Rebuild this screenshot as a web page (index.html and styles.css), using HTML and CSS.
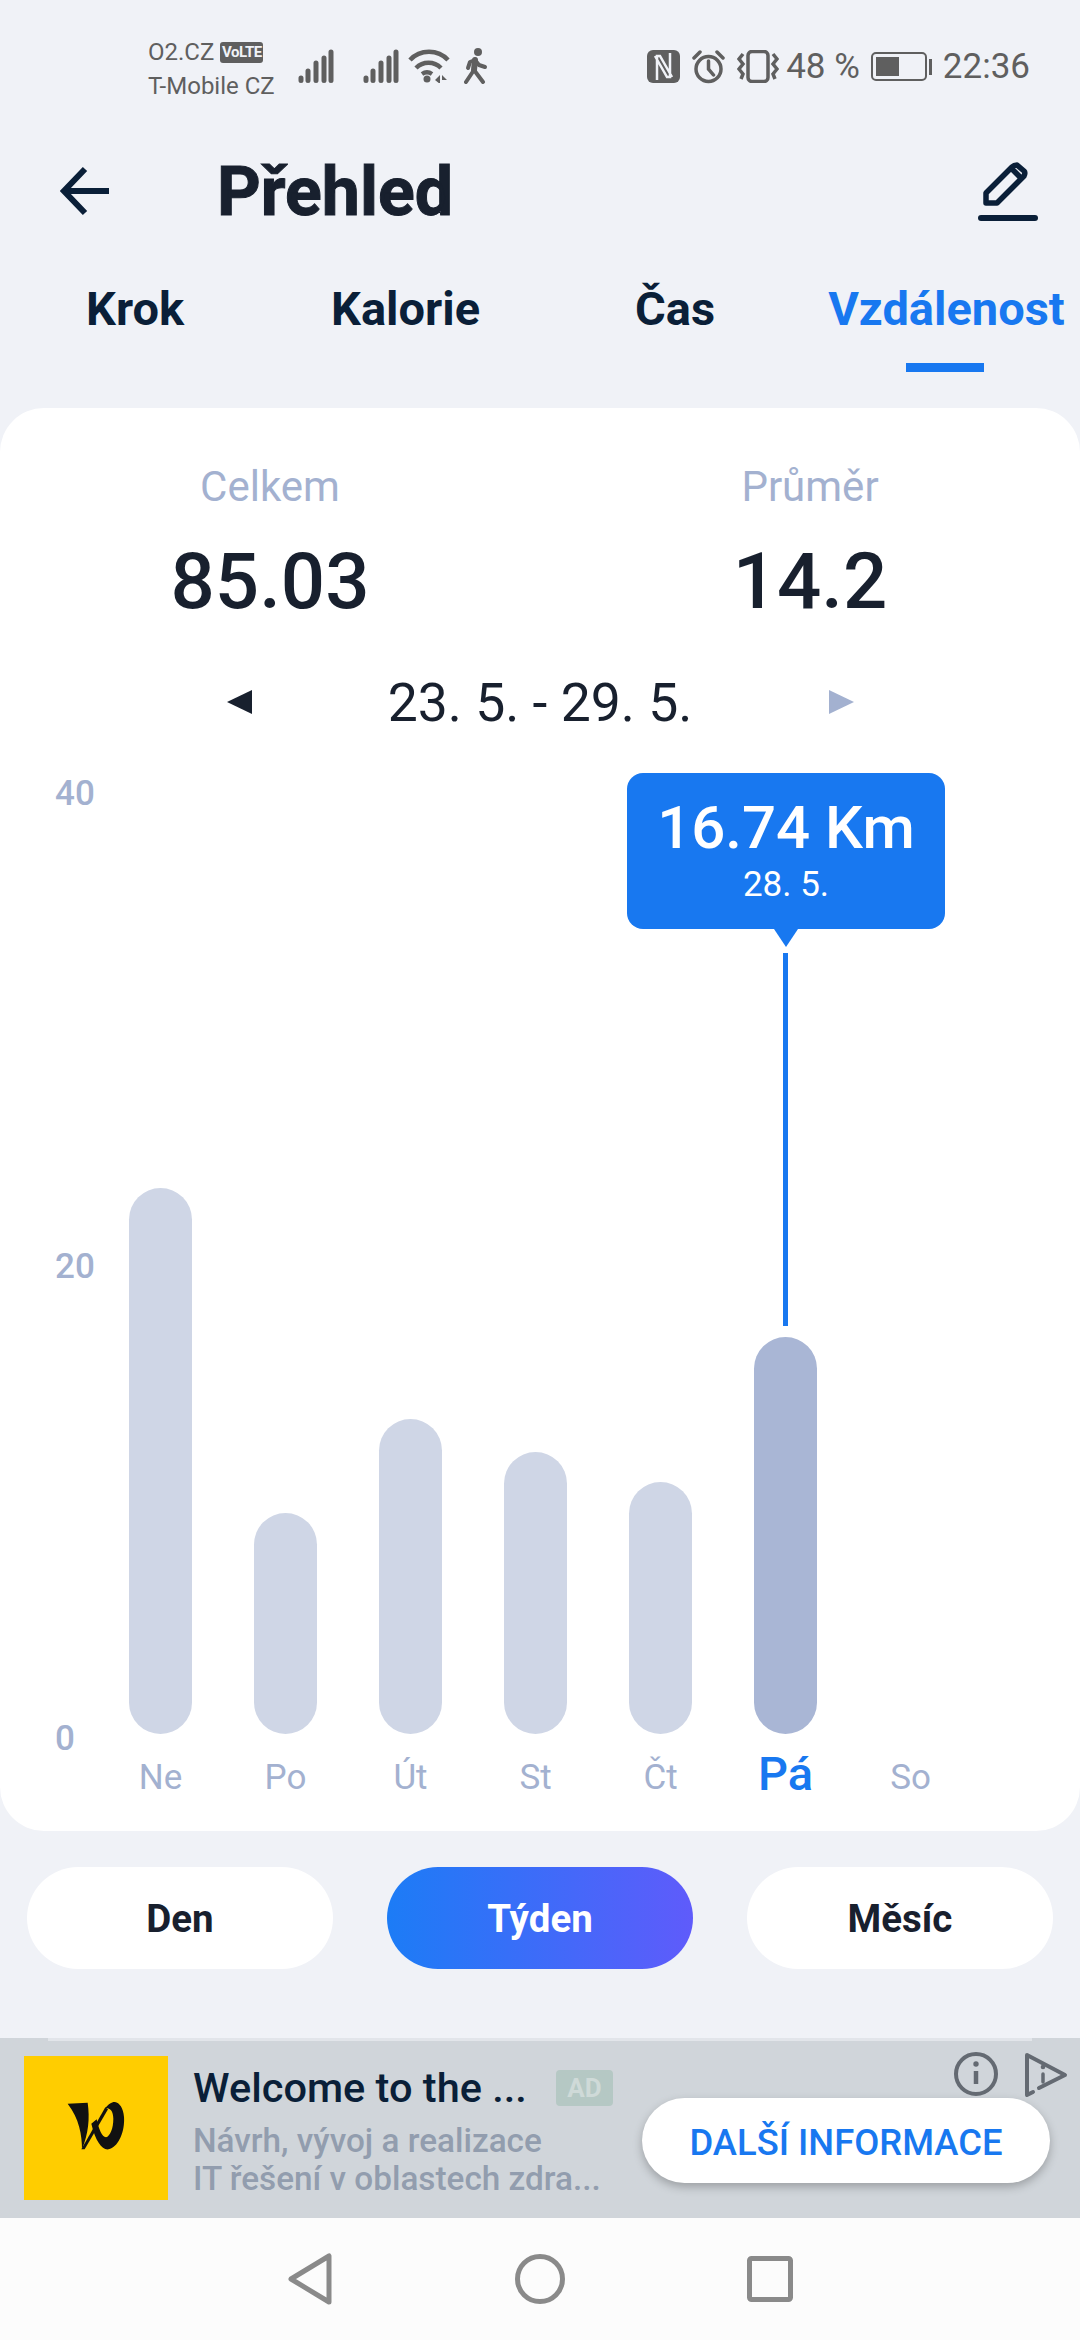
FILE: index.html
```html
<!DOCTYPE html>
<html lang="cs">
<head>
    <meta charset="UTF-8">
    <meta name="viewport" content="width=device-width, initial-scale=1.0">
    <title>Přehled</title>
    <link rel="stylesheet" href="styles.css">
</head>
<body>
    <!-- Status bar -->
    <div class="status-bar">
        <div class="carriers">
            <div class="carrier-top"><span>O2.CZ</span><span class="volte">VoLTE</span></div>
            <div>T-Mobile CZ</div>
        </div>
        <svg class="status-icon signal-one" width="36" height="34" viewBox="0 0 36 34" fill="none" stroke="#5f5f5f" stroke-width="5" stroke-linecap="round"><path d="M3 29v2.500M10 22v9.500M18 14v17.500M26 9v22.500M33 3v28.500"/></svg>
        <svg class="status-icon signal-two" width="36" height="34" viewBox="0 0 36 34" fill="none" stroke="#5f5f5f" stroke-width="5" stroke-linecap="round"><path d="M3 29v2.500M10 22v9.500M18 14v17.500M26 9v22.500M33 3v28.500"/></svg>
        <svg class="status-icon wifi" width="42" height="34" viewBox="0 0 42 34" fill="none" stroke="#5f5f5f" stroke-width="4.500"><path d="M2 11C12 0 30 0 40 11"/><path d="M8 19c7-7 18-7 25 0"/><path d="M14 25c3-2 7-2 10 0"/><circle cx="19" cy="30" r="3.500" fill="#5f5f5f" stroke="none"/><path d="M27 31l5-5v9zM34 26l5 5h-5zM34 29v6" fill="#5f5f5f" stroke="none"/></svg>
        <svg class="status-icon walk" width="24" height="36" viewBox="0 0 24 36" fill="none" stroke="#5f5f5f" stroke-width="4" stroke-linecap="round" stroke-linejoin="round"><circle cx="14" cy="4" r="4" fill="#5f5f5f" stroke="none"/><path d="M11 12 10 22M2 34l8-12 9 12" /><path d="M4 20l2-6 5-2 4 5 6 2"/><path d="M11 12 10 22" stroke-width="6"/></svg>
        <div class="status-right">
            <svg width="33" height="33" viewBox="0 0 33 33"><rect width="33" height="33" rx="6" fill="#5f5f5f"/><path d="M10 30V6h3l12 21M23 3v24h-3L8 6" fill="none" stroke="#f0f2f7" stroke-width="2.500"/></svg>
            <svg width="33" height="34" viewBox="0 0 33 34" fill="none" stroke="#5f5f5f" stroke-width="3.500"><circle cx="16.500" cy="19" r="12.500"/><path d="M16.500 11v8l5 6M2 8l6-6M31 8l-6-6" stroke-linecap="round"/></svg>
            <svg width="42" height="33" viewBox="0 0 42 33" fill="none" stroke="#5f5f5f" stroke-width="3.500"><rect x="11" y="1.500" width="20" height="30" rx="4"/><path d="M6 4 2 9l4 5-4 5 4 5-2 5M36 4l4 5-4 5 4 5-4 5 2 5"/></svg>
            <span class="battery-pct">48 %</span>
            <div class="battery"><div class="battery-level"></div></div>
            <div class="battery-cap"></div>
            <span class="clock">22:36</span>
        </div>
    </div>

    <!-- Header -->
    <nav class="top-nav">
        <svg class="back-icon" width="50" height="52" viewBox="0 0 50 52" fill="none" stroke="#0a1f38" stroke-width="6"><path d="M49 27H6M25 5 4 27l21 22"/></svg>
        <h1 class="page-title">Přehled</h1>
        <svg class="edit-icon" width="60" height="60" viewBox="0 0 60 60" fill="none" stroke="#0a1f38" stroke-width="5.500"><path d="M8 41V31L34 5c2-2 4-2 5-2l7 6c1 1 1 3 0 5L19 41zM33 6l11 11" stroke-linejoin="round"/><path d="M3 56h54" stroke-width="6" stroke-linecap="round"/></svg>
    </nav>

    <div class="tabs">
        <div class="tab tab-krok">Krok</div>
        <div class="tab tab-kalorie">Kalorie</div>
        <div class="tab tab-cas">Čas</div>
        <div class="tab tab-active">Vzdálenost</div>
    </div>

    <!-- Chart card -->
    <section class="card">
        <div class="totals">
            <div class="total">
                <div class="total-label">Celkem</div>
                <div class="total-value">85.03</div>
            </div>
            <div class="total">
                <div class="total-label">Průměr</div>
                <div class="total-value">14.2</div>
            </div>
        </div>
        <div class="date-row">
            <div class="arrow-left"></div>
            <div class="date-range">23. 5. - 29. 5.</div>
            <div class="arrow-right"></div>
        </div>
        <div class="chart">
            <div class="y-axis">
                <span>40</span>
                <span>20</span>
                <span>0</span>
            </div>
            <div class="plot">
                <div class="bar-slot"><div class="bar" style="height: 546px"></div></div>
                <div class="bar-slot"><div class="bar" style="height: 221px"></div></div>
                <div class="bar-slot"><div class="bar" style="height: 315px"></div></div>
                <div class="bar-slot"><div class="bar" style="height: 282px"></div></div>
                <div class="bar-slot"><div class="bar" style="height: 252px"></div></div>
                <div class="bar-slot"><div class="bar bar-selected" style="height: 397px"></div></div>
                <div class="bar-slot"></div>
                <div class="day">Ne</div>
                <div class="day">Po</div>
                <div class="day">Út</div>
                <div class="day">St</div>
                <div class="day">Čt</div>
                <div class="day day-selected">Pá</div>
                <div class="day">So</div>

                <div class="tooltip">
                    <div class="tooltip-value">16.74 Km</div>
                    <div class="tooltip-date">28. 5.</div>
                </div>
                <div class="tooltip-line"></div>
            </div>
        </div>
    </section>

    <div class="range-buttons">
        <button class="range-button">Den</button>
        <button class="range-button range-active">Týden</button>
        <button class="range-button">Měsíc</button>
    </div>

    <!-- Ad -->
    <div class="ad">
        <div class="ad-logo">
            <svg width="60" height="52" viewBox="80 70 180 156" fill="#111"><path d="M85 75 145 72C152 120 147 165 128 212 128 170 120 120 85 75Z"/><path d="M126 212 198 86 206 92 136 212Z"/><path d="M156 135C168 188 190 216 208 212 237 205 257 160 254 115 252 85 237 68 222 70 212 73 205 80 198 88 212 87 222 97 222 120 222 150 212 172 200 176 188 176 178 150 172 122Z"/></svg>
        </div>
        <div class="ad-text">
            <div class="ad-title-row">
                <span class="ad-title">Welcome to the ...</span>
                <span class="ad-badge">AD</span>
            </div>
            <div class="ad-desc">Návrh, vývoj a realizace<br>IT řešení v oblastech zdra...</div>
        </div>
        <button class="ad-button">DALŠÍ INFORMACE</button>
        <svg class="ad-info" width="46" height="46" viewBox="0 0 46 46" fill="none" stroke="#646a72" stroke-width="4"><circle cx="23" cy="23" r="20"/><path d="M23 20v13" stroke-width="4.500"/><circle cx="23" cy="13" r="2.700" fill="#646a72" stroke="none"/></svg>
        <svg class="ad-play" width="44" height="48" viewBox="0 0 44 48" fill="none" stroke="#646a72" stroke-width="4" stroke-linecap="round" stroke-linejoin="round"><path d="M3 44V4l38 20-26 13M3 44l6-3"/><path d="M19 23v8" stroke-width="3.500"/><circle cx="19" cy="16" r="2.300" fill="#646a72" stroke="none"/></svg>
    </div>

    <!-- System navigation -->
    <div class="system-nav">
        <svg width="48" height="52" viewBox="0 0 48 52" fill="none" stroke="#8a8a8a" stroke-width="5" stroke-linejoin="round"><path d="M42 3v46L4 26z"/></svg>
        <svg width="50" height="50" viewBox="0 0 50 50" fill="none" stroke="#8a8a8a" stroke-width="5"><circle cx="25" cy="25" r="22.500"/></svg>
        <svg width="46" height="46" viewBox="0 0 46 46" fill="none" stroke="#8a8a8a" stroke-width="5"><rect x="2.500" y="2.500" width="41" height="41" rx="2"/></svg>
    </div>
</body>
</html>
```

FILE: styles.css
```css
* {
    margin: 0;
    padding: 0;
    box-sizing: border-box;
    font-family: Roboto, 'Noto Sans', sans-serif;
}

body {
    width: 1080px;
    height: 2340px;
    background: #f0f2f7;
    overflow: hidden;
    display: flex;
    flex-direction: column;
}

/* Status bar */
.status-bar {
    height: 130px;
    flex: none;
    display: flex;
    align-items: flex-start;
    padding: 38px 50px 0 148px;
    color: #5f5f5f;
}

.carriers {
    width: 150px;
    font-size: 24px;
    line-height: 28px;
    display: flex;
    flex-direction: column;
    gap: 6px;
}

.carrier-top {
    display: flex;
    align-items: center;
    gap: 6px;
}

.volte {
    width: 43px;
    background: #5f5f5f;
    color: #f0f2f7;
    font-size: 15px;
    font-weight: 700;
    letter-spacing: -0.5px;
    line-height: 21px;
    text-align: center;
    border-radius: 3px;
}

.status-icon {
    flex: none;
    margin-top: 11px;
}

.signal-two { margin-left: 29px; }
.wifi { margin-left: 9px; }
.walk { margin-left: 14px; margin-top: 10px; }

.status-right {
    margin-left: auto;
    display: flex;
    align-items: center;
    gap: 12px;
    height: 33px;
    margin-top: 12px;
}

.battery-pct {
    font-size: 35px;
    margin-left: -5px;
    margin-right: -1px;
}

.battery {
    width: 56px;
    height: 29px;
    border: 2px solid #5f5f5f;
    border-radius: 5px;
    padding: 3px;
}

.battery-level {
    width: 23px;
    height: 100%;
    background: #5f5f5f;
}

.battery-cap {
    width: 3px;
    height: 16px;
    background: #5f5f5f;
    margin-left: -10px;
}

.clock {
    font-size: 35px;
    margin-left: -1px;
}

/* Header */
.top-nav {
    height: 120px;
    flex: none;
    display: flex;
    align-items: center;
    padding: 0 42px 0 60px;
}

.back-icon {
    flex: none;
}

.page-title {
    font-size: 68px;
    font-weight: 700;
    -webkit-text-stroke: 1px #18202e;
    color: #18202e;
    margin: 4px 0 0 107px;
}

.edit-icon {
    margin: 3px 0 0 auto;
}

.tabs {
    height: 158px;
    flex: none;
    display: flex;
    padding-top: 31px;
    font-size: 47px;
    font-weight: 700;
    color: #0a1f38;
}

.tab {
    line-height: 56px;
}

.tab-krok { margin-left: 86px; }
.tab-kalorie { margin-left: 147px; }
.tab-cas { margin-left: 155px; }

.tab-active {
    margin-left: 113px;
    color: #1878f0;
    position: relative;
}

.tab-active::after {
    content: '';
    position: absolute;
    left: 78px;
    top: 82px;
    width: 78px;
    height: 9px;
    background: #1878f0;
}

/* Card */
.card {
    height: 1423px;
    flex: none;
    background: #fff;
    border-radius: 44px;
    padding-top: 49px;
    display: flex;
    flex-direction: column;
}

.totals {
    display: grid;
    grid-template-columns: 1fr 1fr;
    text-align: center;
}

.total-label {
    font-size: 42px;
    line-height: 60px;
    color: #a3b1d0;
}

.total-value {
    font-size: 78px;
    font-weight: 500;
    line-height: 100px;
    color: #18202e;
    margin-top: 15px;
}

.date-row {
    display: flex;
    justify-content: center;
    align-items: center;
    margin-top: 35px;
    height: 70px;
}

.date-range {
    width: 577px;
    text-align: center;
    font-size: 53.500px;
    color: #18202e;
}

.arrow-left, .arrow-right {
    width: 0;
    height: 0;
    border-top: 12px solid transparent;
    border-bottom: 12px solid transparent;
}

.arrow-left {
    border-right: 25px solid #18202e;
}

.arrow-right {
    border-left: 25px solid #a3b1d0;
}

.chart {
    display: flex;
    margin-top: 36px;
}

.y-axis {
    width: 98px;
    flex: none;
    height: 987px;
    padding: 0 0 0 55px;
    display: flex;
    flex-direction: column;
    justify-content: space-between;
    font-size: 35px;
    font-weight: 500;
    line-height: 42px;
    color: #a3b1d0;
}

.plot {
    position: relative;
    display: grid;
    grid-template-columns: repeat(7, 125px);
    grid-template-rows: 961px 88px;
}

.bar-slot {
    display: flex;
    align-items: flex-end;
    justify-content: center;
}

.bar {
    width: 63px;
    background: #cfd6e6;
    border-radius: 32px;
}

.bar-selected {
    background: #a9b6d5;
}

.day {
    text-align: center;
    font-size: 35px;
    line-height: 88px;
    color: #a3b1d0;
}

.day-selected {
    font-size: 47px;
    font-weight: 500;
    color: #1878f0;
    line-height: 80px;
}

.tooltip {
    position: absolute;
    left: 529px;
    top: 0;
    width: 318px;
    height: 156px;
    background: #1878f0;
    border-radius: 16px;
    color: #fff;
    text-align: center;
    padding-top: 19px;
}

.tooltip::after {
    content: '';
    position: absolute;
    left: 147px;
    bottom: -18px;
    border-left: 12px solid transparent;
    border-right: 12px solid transparent;
    border-top: 18px solid #1878f0;
}

.tooltip-value {
    font-size: 60px;
    font-weight: 500;
    line-height: 72px;
}

.tooltip-date {
    font-size: 35px;
    line-height: 42px;
}

.tooltip-line {
    position: absolute;
    left: 685px;
    top: 180px;
    width: 5px;
    height: 373px;
    background: #1878f0;
}

/* Range buttons */
.range-buttons {
    display: flex;
    justify-content: space-between;
    padding: 36px 27px 0;
    height: 207px;
    flex: none;
}

.range-button {
    width: 306px;
    height: 102px;
    border: none;
    border-radius: 51px;
    background: #fff;
    color: #18202e;
    font-size: 38.500px;
    font-weight: 700;
}

.range-active {
    background: linear-gradient(90deg, #1c7cf6, #5f5bfb);
    color: #fff;
}

/* Ad */
.ad {
    height: 180px;
    flex: none;
    position: relative;
    background: #d0d5da;
    display: flex;
    padding: 18px 0 0 24px;
}

.ad::before {
    content: '';
    position: absolute;
    top: 0;
    left: 48px;
    right: 48px;
    height: 3px;
    background: #e2e5ea;
}

.ad-logo {
    width: 144px;
    height: 144px;
    background: #ffcd00;
    display: flex;
    align-items: center;
    justify-content: center;
}

.ad-text {
    margin-left: 25px;
}

.ad-title-row {
    display: flex;
    align-items: center;
    gap: 29px;
    height: 60px;
    padding-top: 3px;
}

.ad-title {
    font-size: 41.500px;
    font-weight: 500;
    color: #0a1f38;
}

.ad-badge {
    width: 57px;
    height: 36px;
    background: #b5c8c4;
    border-radius: 4px;
    color: #cfdad8;
    font-size: 26px;
    font-weight: 700;
    line-height: 36px;
    text-align: center;
}

.ad-desc {
    font-size: 33.300px;
    font-weight: 500;
    line-height: 38px;
    color: #929dae;
    margin-top: 6px;
}

.ad-button {
    position: absolute;
    left: 642px;
    top: 60px;
    width: 408px;
    height: 85px;
    border: none;
    border-radius: 43px;
    background: #fff;
    color: #1878f0;
    font-size: 36.400px;
    font-weight: 500;
    padding-top: 4px;
    box-shadow: 0 4px 10px rgba(0,0,0,0.25);
}

.ad-info {
    position: absolute;
    left: 953px;
    top: 13px;
}

.ad-play {
    position: absolute;
    left: 1024px;
    top: 13px;
}

/* System navigation */
.system-nav {
    height: 122px;
    flex: none;
    background: #fcfcfc;
    display: flex;
    align-items: center;
    padding-left: 287px;
}

.system-nav svg:nth-child(2) {
    margin-left: 180px;
}

.system-nav svg:nth-child(3) {
    margin-left: 182px;
}
```
